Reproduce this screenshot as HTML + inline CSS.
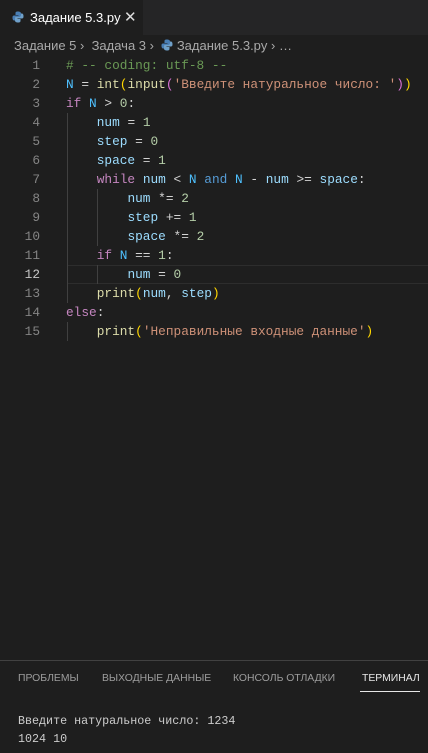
<!DOCTYPE html>
<html><head><meta charset="utf-8"><style>
*{margin:0;padding:0;box-sizing:border-box}
body{width:428px;height:753px;background:#1e1e1e;overflow:hidden;position:relative;font-family:"Liberation Sans",sans-serif}
.tabbar{position:absolute;left:0;top:0;width:428px;height:35px;background:#252526}
.tab{position:absolute;left:0;top:0;width:143px;height:35px;background:#1e1e1e;color:#fff;font-size:13px}
.bc{position:absolute;left:14px;top:38px;color:#a9a9a9;font-size:13px;white-space:pre}
.code{position:absolute;left:0;top:56px;font-family:"Liberation Mono","Noto Sans CJK SC",monospace;font-size:12.8px;}
.ln{position:absolute;left:0;width:40px;text-align:right;color:#858585;height:19px;line-height:19px}
.cl{position:absolute;left:66px;height:19px;line-height:19px;white-space:pre;color:#d4d4d4}
.k{color:#c586c0}.v{color:#9cdcfe}.c{color:#4fc1ff}.f{color:#dcdcaa}.s{color:#ce9178}.n{color:#b5cea8}.cm{color:#6a9955}.g{color:#ffd700}.p{color:#da70d6}
.guide{position:absolute;width:1px;background:#404040}
.panel{position:absolute;left:0;top:660px;width:428px;height:93px;border-top:1px solid #414141;background:#1e1e1e}
.pt{position:absolute;top:12px;font-size:10.4px;color:#9d9d9d}
.term{position:absolute;left:18px;font-family:"Liberation Mono",monospace;font-size:11.7px;color:#ccc;white-space:pre}
</style></head><body>
<div class="tabbar"><div class="tab">
<svg style="position:absolute;left:12px;top:11px" width="12" height="12" viewBox="0 0 12 12"><path d="M6 0.5C3.5 0.5 3.5 1.5 3.5 2.5V4H6.5V4.5H2C0.5 4.5 0.5 6 0.5 7S1 9.5 2 9.5H3V8C3 6.8 4 6 5 6H8C8.8 6 9 5.5 9 5V2.5C9 1 7.5 0.5 6 0.5Z" fill="#4a7fb5"/><path d="M6 11.5C8.5 11.5 8.5 10.5 8.5 9.5V8H5.5V7.5H10C11.5 7.5 11.5 6 11.5 5S11 2.5 10 2.5H9V4C9 5.2 8 6 7 6H4C3.2 6 3 6.5 3 7V9.5C3 11 4.5 11.5 6 11.5Z" fill="#6fa0c9"/></svg>
<span style="position:absolute;left:30px;top:10px">Задание 5.3.py</span>
<span style="position:absolute;left:124px;top:8px;font-size:15px;color:#ddd">✕</span>
</div></div>
<div class="bc">Задание 5 ›  Задача 3 ›  <svg width="12" height="12" viewBox="0 0 12 12" style="vertical-align:-1px"><path d="M6 0.5C3.5 0.5 3.5 1.5 3.5 2.5V4H6.5V4.5H2C0.5 4.5 0.5 6 0.5 7S1 9.5 2 9.5H3V8C3 6.8 4 6 5 6H8C8.8 6 9 5.5 9 5V2.5C9 1 7.5 0.5 6 0.5Z" fill="#4a7fb5"/><path d="M6 11.5C8.5 11.5 8.5 10.5 8.5 9.5V8H5.5V7.5H10C11.5 7.5 11.5 6 11.5 5S11 2.5 10 2.5H9V4C9 5.2 8 6 7 6H4C3.2 6 3 6.5 3 7V9.5C3 11 4.5 11.5 6 11.5Z" fill="#6fa0c9"/></svg> Задание 5.3.py › …</div>
<div style="position:absolute;left:67px;top:265px;width:361px;height:19px;border-top:1px solid #2d2d2d;border-bottom:1px solid #2d2d2d"></div>
<div class="guide" style="left:67px;top:113px;height:190px"></div>
<div class="guide" style="left:67px;top:322px;height:19px"></div>
<div class="guide" style="left:97px;top:189px;height:57px"></div>
<div class="guide" style="left:97px;top:265px;height:19px"></div>
<div class="code">
<div class="ln" style="top:0">1</div><div class="cl" style="top:0"><span class="cm"># -- coding: utf-8 --</span></div>
<div class="ln" style="top:19px">2</div><div class="cl" style="top:19px"><span class="c">N</span> = <span class="f">int</span><span class="g">(</span><span class="f">input</span><span class="p">(</span><span class="s">'Введите натуральное число: '</span><span class="p">)</span><span class="g">)</span></div>
<div class="ln" style="top:38px">3</div><div class="cl" style="top:38px"><span class="k">if</span> <span class="c">N</span> &gt; <span class="n">0</span>:</div>
<div class="ln" style="top:57px">4</div><div class="cl" style="top:57px">    <span class="v">num</span> = <span class="n">1</span></div>
<div class="ln" style="top:76px">5</div><div class="cl" style="top:76px">    <span class="v">step</span> = <span class="n">0</span></div>
<div class="ln" style="top:95px">6</div><div class="cl" style="top:95px">    <span class="v">space</span> = <span class="n">1</span></div>
<div class="ln" style="top:114px">7</div><div class="cl" style="top:114px">    <span class="k">while</span> <span class="v">num</span> &lt; <span class="c">N</span> <span style="color:#569cd6">and</span> <span class="c">N</span> - <span class="v">num</span> &gt;= <span class="v">space</span>:</div>
<div class="ln" style="top:133px">8</div><div class="cl" style="top:133px">        <span class="v">num</span> *= <span class="n">2</span></div>
<div class="ln" style="top:152px">9</div><div class="cl" style="top:152px">        <span class="v">step</span> += <span class="n">1</span></div>
<div class="ln" style="top:171px">10</div><div class="cl" style="top:171px">        <span class="v">space</span> *= <span class="n">2</span></div>
<div class="ln" style="top:190px">11</div><div class="cl" style="top:190px">    <span class="k">if</span> <span class="c">N</span> == <span class="n">1</span>:</div>
<div class="ln" style="top:209px;color:#c6c6c6">12</div><div class="cl" style="top:209px">        <span class="v">num</span> = <span class="n">0</span></div>
<div class="ln" style="top:228px">13</div><div class="cl" style="top:228px">    <span class="f">print</span><span class="g">(</span><span class="v">num</span>, <span class="v">step</span><span class="g">)</span></div>
<div class="ln" style="top:247px">14</div><div class="cl" style="top:247px"><span class="k">else</span>:</div>
<div class="ln" style="top:266px">15</div><div class="cl" style="top:266px">    <span class="f">print</span><span class="g">(</span><span class="s">'Неправильные входные данные'</span><span class="g">)</span></div>
</div>
<div class="panel">
<span class="pt" style="left:18px">ПРОБЛЕМЫ</span>
<span class="pt" style="left:102px">ВЫХОДНЫЕ ДАННЫЕ</span>
<span class="pt" style="left:233px">КОНСОЛЬ ОТЛАДКИ</span>
<span class="pt" style="left:362px;color:#e7e7e7">ТЕРМИНАЛ</span>
<div style="position:absolute;left:360px;top:30px;width:60px;height:1px;background:#e7e7e7"></div>
<div class="term" style="top:53px">Введите натуральное число: 1234</div>
<div class="term" style="top:71px">1024 10</div>
</div>
</body></html>
